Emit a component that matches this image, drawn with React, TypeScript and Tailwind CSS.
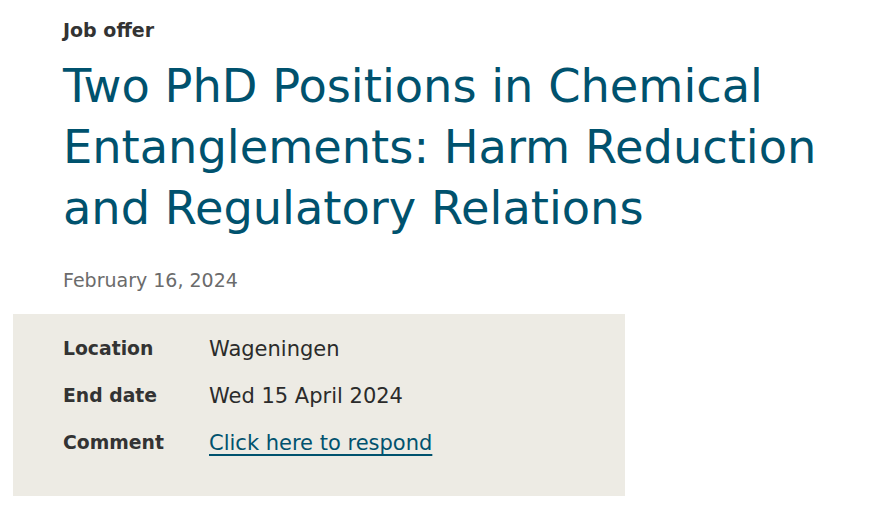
export default function App() {
  const rows = [
    { label: "Location", value: "Wageningen" },
    { label: "End date", value: "Wed 15 April 2024" },
  ];
  return (
    <div className="min-h-[505px] bg-white font-['DejaVu_Sans',Verdana,sans-serif] text-[#2b2b2b]">
      <div className="pt-[18px]">
        <p className="pl-[63px] text-[19px] font-bold leading-[24px] text-[#333333]">Job offer</p>
        <h1 className="mt-[14px] pl-[63px] pr-[40px] text-[46.3px] font-normal leading-[61px] text-[#00526e]">
          Two PhD Positions in Chemical Entanglements: Harm Reduction and Regulatory Relations
        </h1>
        <p className="mt-[29px] pl-[63px] text-[19px] leading-[24px] text-[#6b6b6b]">February 16, 2024</p>
        <div className="ml-[13px] mt-[22px] w-[612px] bg-[#edebe4] pb-[41px] pl-[50px] pt-[23px]">
          <dl className="flex flex-col gap-[23px]">
            {rows.map((r) => (
              <div key={r.label} className="flex h-[24px] items-center">
                <dt className="w-[146px] text-[18.8px] font-bold leading-[24px] text-[#333333]">{r.label}</dt>
                <dd className="text-[21px] leading-[24px]">{r.value}</dd>
              </div>
            ))}
            <div className="flex h-[24px] items-center">
              <dt className="w-[146px] text-[18.8px] font-bold leading-[24px] text-[#333333]">Comment</dt>
              <dd className="text-[21px] leading-[24px]">
                <a href="#" className="text-[#00526e] underline decoration-[2px] underline-offset-[4px]">
                  Click here to respond
                </a>
              </dd>
            </div>
          </dl>
        </div>
      </div>
    </div>
  );
}
